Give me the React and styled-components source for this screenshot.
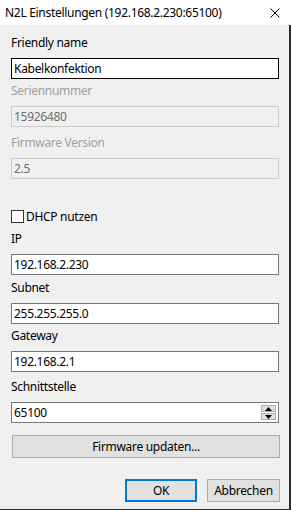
import React from 'react';
import styled, { createGlobalStyle } from 'styled-components';

const GlobalStyle = createGlobalStyle`
  html, body {
    margin: 0;
    padding: 0;
    background: #ffffff;
  }
  * {
    box-sizing: border-box;
  }
`;

const Window = styled.div`
  width: 291px;
  height: 510px;
  display: flex;
  flex-direction: column;
  font-family: 'Segoe UI', 'Noto Sans', 'Liberation Sans', sans-serif;
  font-size: 12px;
  letter-spacing: -0.3px;
  color: #000;
`;

const TitleBar = styled.div`
  height: 25px;
  flex: none;
  display: flex;
  align-items: center;
  justify-content: space-between;
  background: #ffffff;
  padding: 0 11px 0 5px;
`;

const Body = styled.div`
  flex: 1;
  background: #f0f0f0;
  padding: 10px 9px 0 11px;
  display: flex;
  flex-direction: column;
  border-right: 2px solid #2b2b2b;
  border-bottom: 1px solid #2b2b2b;
`;

const Label = styled.div`
  height: 16px;
  line-height: 16px;
  margin-top: ${(p) => p.$mt || 0}px;
  margin-bottom: 7px;
  color: ${(p) => (p.$disabled ? '#a0a0a0' : '#000')};
`;

const Input = styled.div`
  height: 21px;
  width: 268px;
  display: flex;
  align-items: center;
  padding: 0 2px;
  background: ${(p) => (p.$disabled ? '#f0f0f0' : '#ffffff')};
  border: 1px solid
    ${(p) => (p.$disabled ? '#cccccc' : p.$focus ? '#000000' : '#7a7a7a')};
  color: ${(p) => (p.$disabled ? '#6d6d6d' : '#000')};
`;

const Value = styled.span`
  flex: 1;
`;

const Spin = styled.div`
  width: 15px;
  height: 15px;
  display: flex;
  flex-direction: column;
  gap: 1px;
`;

const SpinButton = styled.div`
  flex: 1;
  background: #e1e1e1;
  border: 1px solid #adadad;
  display: flex;
  align-items: center;
  justify-content: center;
`;

const CheckRow = styled.label`
  margin-top: 29px;
  height: 16px;
  display: flex;
  align-items: center;
  gap: 2px;
`;

const Box = styled.span`
  width: 13px;
  height: 13px;
  border: 1px solid #333333;
  background: #ffffff;
`;

const Button = styled.div`
  height: 23px;
  display: flex;
  align-items: center;
  justify-content: center;
  background: #e1e1e1;
  border: ${(p) => (p.$primary ? '2px solid #0078d7' : '1px solid #adadad')};
`;

const WideButton = styled(Button)`
  margin-top: 12px;
  margin-left: 1px;
  width: 268px;
`;

const Footer = styled.div`
  margin-top: 21px;
  display: flex;
  justify-content: flex-end;
  gap: 10px;
`;

const DialogButton = styled(Button)`
  width: ${(p) => p.$w}px;
`;

function Arrow({ up }) {
  return (
    <svg width="7" height="4" viewBox="0 0 7 4">
      <path d={up ? 'M0 4 L3.5 0 L7 4 Z' : 'M0 0 L3.5 4 L7 0 Z'} fill="#000" />
    </svg>
  );
}

function Field({ label, value, mt, disabled, focus, children }) {
  return (
    <>
      <Label $mt={mt} $disabled={disabled}>
        {label}
      </Label>
      <Input $disabled={disabled} $focus={focus}>
        <Value>{value}</Value>
        {children}
      </Input>
    </>
  );
}

export default function App() {
  return (
    <>
      <GlobalStyle />
      <Window>
        <TitleBar>
          <span>N2L Einstellungen (192.168.2.230:65100)</span>
          <svg width="10" height="10" viewBox="0 0 10 10">
            <path d="M0.5 0.5 L9.5 9.5 M9.5 0.5 L0.5 9.5" stroke="#000" strokeWidth="1" />
          </svg>
        </TitleBar>
        <Body>
          <Field label="Friendly name" value="Kabelkonfektion" focus />
          <Field label="Seriennummer" value="15926480" mt={4} disabled />
          <Field label="Firmware Version" value="2.5" mt={8} disabled />
          <CheckRow>
            <Box />
            <span>DHCP nutzen</span>
          </CheckRow>
          <Field label="IP" value="192.168.2.230" mt={7} />
          <Field label="Subnet" value="255.255.255.0" mt={5} />
          <Field label="Gateway" value="192.168.2.1" mt={4} />
          <Field label="Schnittstelle" value="65100" mt={7}>
            <Spin>
              <SpinButton>
                <Arrow up />
              </SpinButton>
              <SpinButton>
                <Arrow />
              </SpinButton>
            </Spin>
          </Field>
          <WideButton>Firmware updaten...</WideButton>
          <Footer>
            <DialogButton $primary $w={72}>
              OK
            </DialogButton>
            <DialogButton $w={73}>Abbrechen</DialogButton>
          </Footer>
        </Body>
      </Window>
    </>
  );
}
